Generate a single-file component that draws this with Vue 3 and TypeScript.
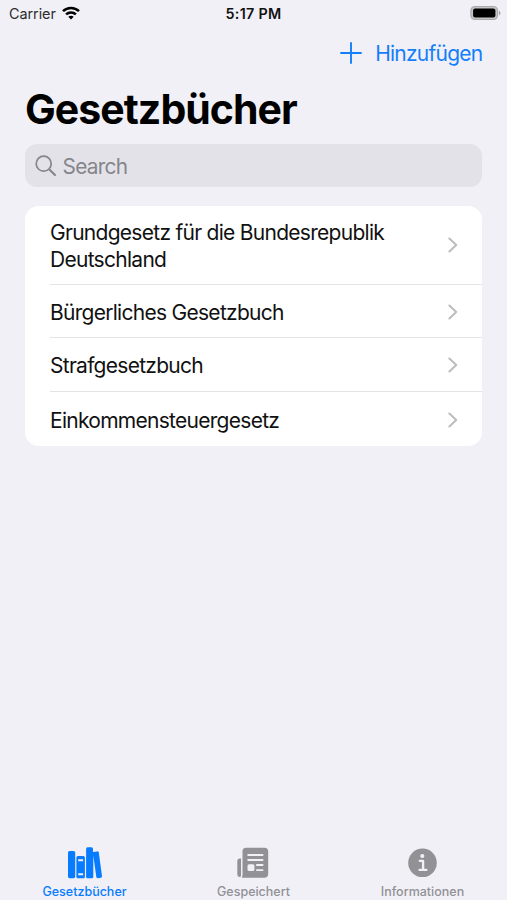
<script setup lang="ts">
interface Book {
  id: string
  title: string
}

const books: Book[] = [
  { id: 'gg', title: 'Grundgesetz für die Bundesrepublik Deutschland' },
  { id: 'bgb', title: 'Bürgerliches Gesetzbuch' },
  { id: 'stgb', title: 'Strafgesetzbuch' },
  { id: 'estg', title: 'Einkommensteuergesetz' },
]
</script>

<template>
  <div class="screen">
    <header class="status">
      <div class="carrier">
        <span>Carrier</span>
        <svg width="18" height="14" viewBox="0 0 18 14">
          <g fill="none" stroke="#000" stroke-width="2.5">
            <path d="M1 5.2C5.4 .8 12.6 .8 17 5.2" />
            <path d="M4.1 8.4C6.8 5.7 11.2 5.7 13.9 8.4" />
          </g>
          <path d="M9 13.6L6.3 10.8C7.8 9.4 10.2 9.4 11.7 10.8Z" />
        </svg>
      </div>
      <span class="clock">5:17 PM</span>
      <svg class="battery" width="31" height="16" viewBox="0 0 31 16">
        <rect x=".9" y="1.5" width="26.6" height="13" rx="4" fill="#c4c4c6" stroke="#aaaaad" stroke-width="1.2" />
        <rect x="3.1" y="3.6" width="22.3" height="8.9" rx="2" />
        <path d="M28.8 5.8C31 6.5 31 9.7 28.8 10.4Z" fill="#a5a5a9" />
      </svg>
    </header>

    <nav class="toolbar">
      <button class="add">
        <svg width="22" height="22" viewBox="0 0 22 22">
          <path d="M11 1V21M1 11H21" stroke="currentColor" stroke-width="1.9" stroke-linecap="round" />
        </svg>
        <span>Hinzufügen</span>
      </button>
    </nav>

    <h1>Gesetzbücher</h1>

    <div class="search">
      <svg width="22" height="22" viewBox="0 0 22 22" fill="none" stroke="#85858b" stroke-linecap="round">
        <circle cx="8.7" cy="8.7" r="7.5" stroke-width="1.7" />
        <path d="M14.4 14.4L20 20" stroke-width="2.1" />
      </svg>
      <span>Search</span>
    </div>

    <ul class="list">
      <li v-for="book in books" :key="book.id" class="row">
        <span class="title">{{ book.title }}</span>
        <svg class="chevron" width="10" height="16" viewBox="0 0 10 16">
          <path d="M1.4 1.5L8.2 8L1.4 14.5" fill="none" stroke="#bebec1" stroke-width="2.1" stroke-linecap="round" stroke-linejoin="round" />
        </svg>
      </li>
    </ul>

    <footer class="tabs">
      <div class="tab active">
        <svg width="36" height="34" viewBox="0 0 36 34" fill="currentColor">
          <rect x="1" y="4" width="7.2" height="27.2" rx="1.6" />
          <path fill-rule="evenodd" d="M10.9 9H16.4Q17.9 9 17.9 10.5V29.7Q17.9 31.2 16.4 31.2H10.9Q9.4 31.2 9.4 29.7V10.5Q9.4 9 10.9 9ZM11.2 12.2V14.2H16.1V12.2ZM11.2 26.2V28.2H16.1V26.2Z" />
          <path d="M20.6 .3H24.4Q26 .3 26 1.9V4.9L30.3 4.4Q31.6 4.2 31.8 5.5L35 29.3Q35.2 30.6 33.9 30.8L30.8 31.2Q29.5 31.4 29.3 30.1L26.3 8.5V29.7Q26.3 31.2 24.8 31.2H20.5Q19.1 31.2 19.1 29.7V1.9Q19.1 .3 20.6 .3Z" />
        </svg>
        <span class="label">Gesetzbücher</span>
      </div>
      <div class="tab">
        <svg width="36" height="34" viewBox="0 0 36 34">
          <path d="M5 11.5V29.2Q3.1 30.7 1.8 28.9Q1.3 28.2 1.3 27V14Q1.3 11.5 3.8 11.5Z" fill="currentColor" />
          <path d="M10 .8H28.4Q32.2 .8 32.2 4.6V26.8Q32.2 30.8 28.2 30.8H5.7Q6.5 29.8 6.5 27.8V4.5Q6.5 .8 10 .8Z" fill="currentColor" />
          <g stroke="#f1f0f6" stroke-width="1.9" stroke-linecap="round">
            <path d="M12.2 8H26.6M12.2 13H26.6M20.9 18H26.6M20.9 23.1H26.6" />
          </g>
          <rect x="11.5" y="17.3" width="6.9" height="6.8" rx="1.5" fill="#f1f0f6" />
        </svg>
        <span class="label">Gespeichert</span>
      </div>
      <div class="tab">
        <svg width="36" height="34" viewBox="0 0 36 34">
          <circle cx="17.5" cy="15.8" r="14.3" fill="currentColor" />
          <circle cx="17.3" cy="9" r="2.1" fill="#f1f0f6" />
          <path d="M14.8 13.9H18.1V22.7M14.5 22.9H21.4" fill="none" stroke="#f1f0f6" stroke-width="2.3" stroke-linecap="round" stroke-linejoin="round" />
        </svg>
        <span class="label">Informationen</span>
      </div>
    </footer>
  </div>
</template>

<style>
body {
  background: #f1f0f6;
}
</style>

<style scoped>
.screen {
  box-sizing: border-box;
  width: 507px;
  height: 900px;
  display: flex;
  flex-direction: column;
  overflow: hidden;
  background: #f1f0f6;
  color: #111;
  font-family: Inter, "Liberation Sans", sans-serif;
}
svg {
  display: block;
  flex: none;
}
.status {
  height: 28px;
  display: grid;
  grid-template-columns: 1fr auto 1fr;
  align-items: center;
  padding: 0 6px 2px;
  box-sizing: border-box;
  font-size: 14.4px;
}
.carrier {
  display: flex;
  align-items: center;
  gap: 6px;
  padding-left: 3px;
  letter-spacing: -0.05px;
  color: #2c2c2e;
}
.clock {
  font-weight: 600;
  font-size: 14.3px;
  letter-spacing: 0.3px;
}
.battery {
  justify-self: end;
}
.toolbar {
  height: 50px;
  display: flex;
  justify-content: flex-end;
  align-items: center;
  padding-right: 24.5px;
}
.add {
  display: flex;
  align-items: center;
  gap: 13px;
  padding: 0;
  border: 0;
  background: none;
  color: #147efb;
  font: inherit;
  font-size: 21px;
  letter-spacing: -0.75px;
}
.add svg {
  margin-bottom: 1px;
}
h1 {
  margin: 7px 0 0 25px;
  height: 48px;
  line-height: 48px;
  font-size: 41px;
  font-weight: 700;
  letter-spacing: -0.95px;
  color: #000;
}
.search {
  box-sizing: border-box;
  margin: 11px 25px 0;
  height: 43px;
  padding: 1px 0 0 9.5px;
  display: flex;
  align-items: center;
  gap: 6px;
  border-radius: 12px;
  background: #e3e2e8;
  color: #85858b;
  font-size: 20.8px;
  letter-spacing: -0.7px;
}
.search svg {
  margin-bottom: 1px;
}
.list {
  list-style: none;
  margin: 19px 25px 0;
  padding: 0 0 0 25px;
  border-radius: 14px;
  background: #fff;
}
.row {
  box-sizing: border-box;
  min-height: 53.7px;
  padding: 10.1px 24px 10.1px 0;
  display: flex;
  align-items: center;
  justify-content: space-between;
  border-bottom: 1px solid #e4e4e7;
}
.row:last-child {
  border-bottom: 0;
}
.title {
  width: 350px;
  padding-top: 4px;
  font-size: 21px;
  line-height: 26.8px;
  letter-spacing: -0.72px;
}
.chevron {
  margin-top: 1px;
}
.tabs {
  margin-top: auto;
  height: 54px;
  display: grid;
  grid-template-columns: repeat(3, 1fr);
}
.tab {
  display: flex;
  flex-direction: column;
  align-items: center;
  padding-top: 1px;
  color: #919196;
}
.active {
  color: #087cff;
}
.label {
  margin-top: 2.7px;
  font-size: 12.5px;
  line-height: 15px;
  font-weight: 500;
  white-space: nowrap;
}
</style>
